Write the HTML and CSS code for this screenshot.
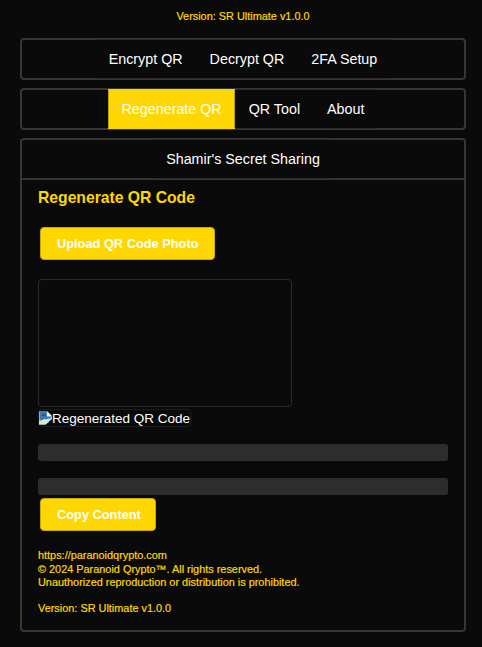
FILE: index.html
```html
<!DOCTYPE html>
<html lang="en">
<head>
<meta charset="utf-8">
<title>Paranoid Qrypto</title>
<link rel="stylesheet" href="styles.css">
</head>
<body>
<div class="version-top">Version: SR Ultimate v1.0.0</div>
<nav class="tabs">
  <button class="tab">Encrypt QR</button>
  <button class="tab">Decrypt QR</button>
  <button class="tab">2FA Setup</button>
</nav>
<nav class="tabs">
  <button class="tab active">Regenerate QR</button>
  <button class="tab">QR Tool</button>
  <button class="tab">About</button>
</nav>
<main class="panel">
  <div class="panel-tabs"><button class="tab">Shamir's Secret Sharing</button></div>
  <section class="content">
    <h2 class="title">Regenerate QR Code</h2>
    <button class="btn upload">Upload QR Code Photo</button>
    <div class="preview"></div>
    <div class="broken">
      <svg class="broken-icon" width="13" height="16" viewBox="0 0 14 16" aria-hidden="true">
        <path d="M0 1h9l5 5v3l-7 6H0z" fill="#cfe0f5"/>
        <path d="M.5 1.500h8v4.500h5v2L.5 11z" fill="#3d78b8"/>
        <path d="M0 12l6-3 5 3-4 3H0z" fill="#d5ecc4"/>
        <path d="M9 1l5 5H9z" fill="#fff"/>
        <path d="M3 4h4v2H3z" fill="#1d4f86"/>
      </svg><span>Regenerated QR Code</span>
    </div>
    <div class="field first"></div>
    <div class="field second"></div>
    <button class="btn copy">Copy Content</button>
    <footer class="foot">
      <div>https://paranoidqrypto.com</div>
      <div>© 2024 Paranoid Qrypto™. All rights reserved.</div>
      <div>Unauthorized reproduction or distribution is prohibited.</div>
      <div class="foot-version">Version: SR Ultimate v1.0.0</div>
    </footer>
  </section>
</main>
</body>
</html>
```
FILE: styles.css
```css
* { box-sizing: border-box; }
html, body { height: 100%; }
body {
  margin: 0;
  padding: 9px 16px 0 20px;
  background: #0a0a0a;
  color: #fff;
  font-family: "Liberation Sans", Arial, sans-serif;
  overflow: hidden;
}
.version-top {
  text-align: center;
  color: #ffd700;
  font-size: 10.9px;
  line-height: 14px;
  height: 29px;
  -webkit-text-stroke: 0.2px #ffd700;
}
.tabs {
  display: flex;
  justify-content: center;
  height: 42px;
  margin-bottom: 8px;
  border: 2px solid #363636;
  border-radius: 4px;
}
.tab {
  border: solid #2c2c2c;
  border-width: 1px 0;
  background: #0a0a0a;
  color: #fff;
  font: 14.3px "Liberation Sans", Arial, sans-serif;
  padding: 0 13.500px;
  height: 40px;
  margin: -1px 0;
}
.tab.active {
  background: #ffd700;
  border-color: #ffd700;
  box-shadow: inset 1px 0 #b8a000, inset -1px 0 #b8a000;
}
.panel {
  border: 2px solid #363636;
  border-radius: 4px;
  height: 494px;
}
.panel-tabs {
  display: flex;
  justify-content: center;
  height: 40px;
  border-bottom: 2px solid #363636;
}
.content { padding: 0 16px; }
.title {
  margin: 0;
  padding-top: 8px;
  color: #ffd700;
  font-size: 15.7px;
  line-height: 20px;
  font-weight: 700;
}
.btn {
  display: block;
  margin-left: 2px;
  background: #ffd700;
  color: #fff;
  border: 1px solid #c9a900;
  border-radius: 4px;
  font: 700 12.8px "Liberation Sans", Arial, sans-serif;
  white-space: nowrap;
  height: 33px;
  padding: 0 16px;
}
.upload { margin-top: 19px; width: 175px; }
.preview {
  margin-top: 19px;
  width: 254px;
  height: 128px;
  border: 1px solid #2a2a2a;
  border-radius: 4px;
}
.broken {
  display: inline-flex;
  align-items: center;
  margin-top: 2px;
  height: 18px;
  font-size: 13.5px;
  border-radius: 4px;
  border: 1px solid #1c1c1c;
  vertical-align: top;
}
.broken-icon { flex: none; }
.field {
  width: 410px;
  height: 17px;
  background: #2d2d2d;
  border-radius: 3px;
}
.first { margin-top: 17px; }
.second { margin-top: 17px; }
.copy { margin-top: 3px; width: 116px; }
.foot {
  margin-top: 18px;
  color: #ffd700;
  font-size: 10.9px;
  line-height: 13.500px;
  -webkit-text-stroke: 0.2px #ffd700;
}
.foot-version { margin-top: 12px; }
```
